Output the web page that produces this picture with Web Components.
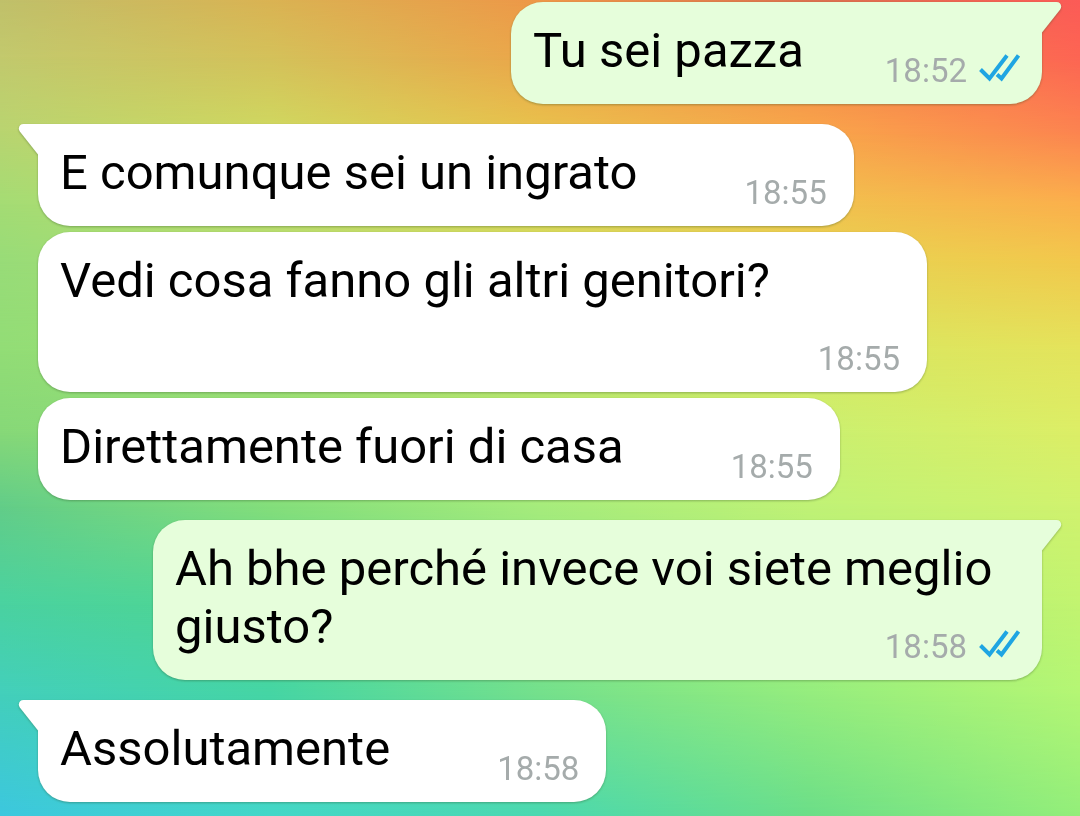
<!DOCTYPE html>
<html lang="it">
<head>
<meta charset="utf-8">
<meta name="viewport" content="width=device-width, initial-scale=1">
<title>Chat</title>
<style>
    body {
        margin: 0;
        font-family: Roboto, sans-serif;
    }
</style>
</head>
<body>
<chat-view>
    <chat-group side="out">
        <chat-message side="out" time="18:52" tail>Tu sei pazza</chat-message>
    </chat-group>
    <chat-group side="in">
        <chat-message side="in" time="18:55" tail>E comunque sei un ingrato</chat-message>
        <chat-message side="in" time="18:55">Vedi cosa fanno gli altri genitori?</chat-message>
        <chat-message side="in" time="18:55">Direttamente fuori di casa</chat-message>
    </chat-group>
    <chat-group side="out">
        <chat-message side="out" time="18:58" tail>Ah bhe perché invece voi siete meglio giusto?</chat-message>
    </chat-group>
    <chat-group side="in">
        <chat-message side="in" time="18:58" tail>Assolutamente</chat-message>
    </chat-group>
</chat-view>

<script>
(function() {
    'use strict';

    let viewTemplate = `
        <style>
            :host {
                display: grid;
                min-height: 100vh;
                overflow: hidden;
            }

            chat-wallpaper,
            .messages {
                grid-area: 1 / 1;
            }

            .messages {
                display: flex;
                flex-direction: column;
                gap: 20px;
                padding: 2px 38px 14px;
                z-index: 1;
            }
        </style>

        <chat-wallpaper></chat-wallpaper>
        <main class="messages"><slot></slot></main>
    `;

    class ChatView extends HTMLElement {
        constructor() {
            super();
            this.attachShadow({mode: 'open'}).innerHTML = viewTemplate;
        }
    }

    // each row: its height on the wallpaper, then colours from left to right
    let wallpaperRows = [
        [0, '#c0c06a', '#dab353', '#ee9848', '#da714f', '#fc5b57'],
        [7, '#c2c96d', '#d4c15a', '#eca549', '#f0884a', '#fd6553'],
        [16, '#b9d470', '#cfd860', '#e8c24c', '#f9a54a', '#fc8350'],
        [25, '#a4dc74', '#bedc6c', '#dcd458', '#f0c24e', '#fbb04c'],
        [32, '#98dc78', '#b0dc70', '#d0dc5e', '#e6d552', '#f2c84c'],
        [43, '#92dd76', '#a0de72', '#bce068', '#d6e862', '#e4e45c'],
        [53, '#86d878', '#94de76', '#b2ea70', '#caf070', '#dcee66'],
        [62, '#62cd88', '#84de7b', '#a6ec7c', '#c0f276', '#d0f26e'],
        [74, '#4ad2a0', '#50d690', '#86e482', '#a8ee78', '#c2f470'],
        [85, '#43cfbb', '#45d5a4', '#74e08c', '#95ed7e', '#b4f674'],
        [100, '#3cc7de', '#43d7c8', '#4ad8b0', '#6bde88', '#93ee7a']
    ];

    let wallpaperTemplate = `
        <style>
            :host {
                display: grid;
            }

            .row {
                grid-area: 1 / 1;
            }
        </style>
    `;

    class ChatWallpaper extends HTMLElement {
        constructor() {
            super();
            this.attachShadow({mode: 'open'}).innerHTML = wallpaperTemplate;

            // every row fades in over the one above it
            wallpaperRows.forEach(([stop, ...colors], i) => {
                let $row = document.createElement('div');
                $row.className = 'row';
                $row.style.background = `linear-gradient(to right, ${colors.join(', ')})`;
                if (i > 0) {
                    let prev = wallpaperRows[i - 1][0];
                    $row.style.maskImage = `linear-gradient(transparent ${prev}%, #000 ${stop}%)`;
                }
                this.shadowRoot.appendChild($row);
            });
        }
    }

    let groupTemplate = `
        <style>
            :host {
                display: flex;
                flex-direction: column;
                align-items: flex-start;
                gap: 6px;
            }
            :host([side="out"]) {
                align-items: flex-end;
            }
        </style>

        <slot></slot>
    `;

    class ChatGroup extends HTMLElement {
        constructor() {
            super();
            this.attachShadow({mode: 'open'}).innerHTML = groupTemplate;
        }
    }

    let messageTemplate = `
        <style>
            :host {
                --bubble: #fff;
                display: block;
                position: relative;
                box-sizing: border-box;
                max-width: calc(100% - 115px);
                padding: 20px 27px 13px 22px;
                border-radius: 32px;
                background: var(--bubble);
                color: #000;
                font-size: 49px;
                line-height: 58px;
                filter: drop-shadow(0 1px 1px rgba(40, 70, 30, .35));
            }
            :host([side="out"]) {
                --bubble: #e6fedb;
                padding-right: 22px;
            }
            :host([side="in"][tail]) {
                border-top-left-radius: 0;
            }
            :host([side="out"][tail]) {
                border-top-right-radius: 0;
            }

            .text {
                display: flow-root;
                margin: 0;
            }

            .meta {
                float: right;
                display: flex;
                gap: 12px;
                margin: 29px 0 0 107px;
                color: #a5abab;
                font-size: 33px;
                line-height: 40px;
            }
            :host([side="out"]) .meta {
                margin-left: 81px;
            }

            .ticks {
                display: none;
                width: 41px;
                height: 28px;
                margin-top: 3px;
                fill: none;
                stroke: #1fa5e2;
                stroke-width: 4;
            }
            :host([side="out"]) .ticks {
                display: block;
            }

            .tail {
                display: none;
                position: absolute;
                top: 0;
                left: -20px;
                width: 21px;
                height: 31px;
                fill: var(--bubble);
            }
            :host([tail]) .tail {
                display: block;
            }
            :host([side="out"]) .tail {
                left: auto;
                right: -20px;
                transform: scaleX(-1);
            }
        </style>

        <svg class="tail" viewBox="0 0 21 31" aria-hidden="true">
            <path d="M21 0H5.500C1.500 0-.5 4 1.800 7.500L20 30.500H21Z"/>
        </svg>
        <p class="text"><slot></slot><span class="meta"><time></time><svg class="ticks" viewBox="0 0 41 28" aria-hidden="true">
            <path d="M1.500 15.500L10.500 24.500L28 1.500"/>
            <path d="M18 20.500L22.500 24.500L39.500 1.500"/>
        </svg></span></p>
    `;

    class ChatMessage extends HTMLElement {
        constructor() {
            super();
            this.attachShadow({mode: 'open'}).innerHTML = messageTemplate;
            this.$time = this.shadowRoot.querySelector('time');
        }

        connectedCallback() {
            this.$time.textContent = this.getAttribute('time');
        }
    }

    customElements.define('chat-wallpaper', ChatWallpaper);
    customElements.define('chat-view', ChatView);
    customElements.define('chat-group', ChatGroup);
    customElements.define('chat-message', ChatMessage);
})();
</script>
</body>
</html>
